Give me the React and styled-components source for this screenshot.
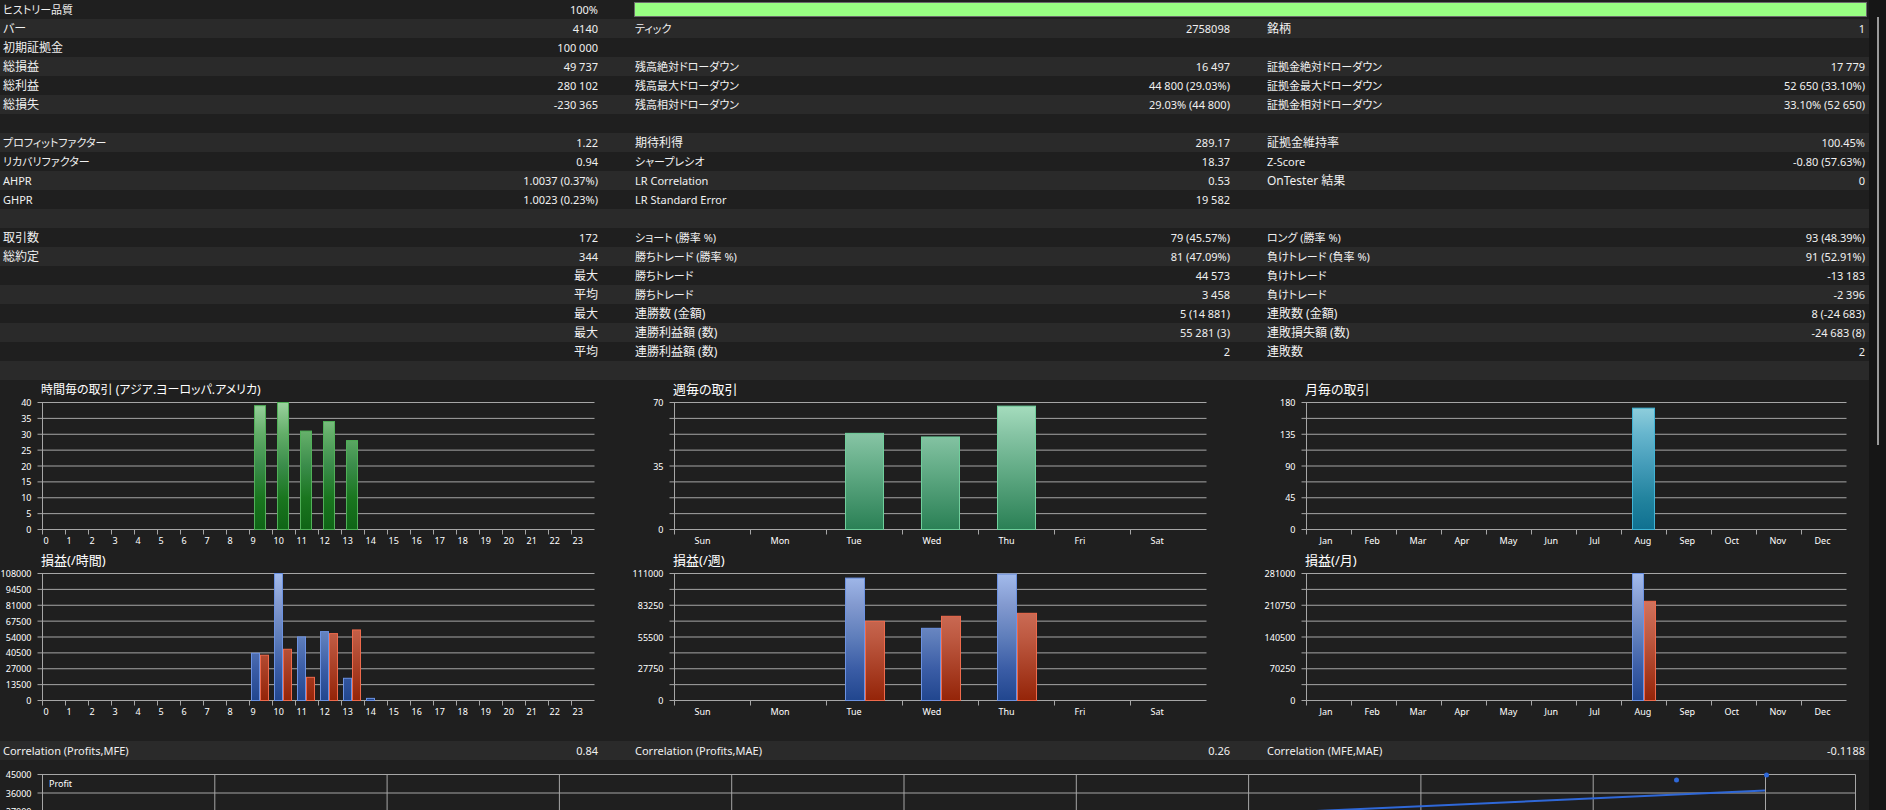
import React from 'react'
import { styled, createGlobalStyle } from 'styled-components'

const GlobalStyle = createGlobalStyle`
  * {
    box-sizing: border-box;
  }
  body {
    margin: 0;
    background: #161616;
    color: #f0f0f0;
    font-family: "Noto Sans", "Noto Sans CJK JP", sans-serif;
    font-feature-settings: "palt";
  }
`;

const Page = styled.div`
  display: flex;
  height: 100vh;
  overflow: hidden;
`;

const Report = styled.main`
  flex: 1;
  min-width: 0;
  background: #1f1f1f;
`;

const ScrollTrack = styled.div`
  width: 17px;
  display: flex;
  justify-content: center;
  padding-top: 17px;
`;

const ScrollThumb = styled.div`
  width: 2px;
  height: 54%;
  background: #9a9a9a;
`;

const Table = styled.table`
  width: 100%;
  table-layout: fixed;
  border-collapse: collapse;
`;

const Col = styled.col`
  width: ${(p) => p.$width};
`;

const Row = styled.tr`
  height: 19px;
  background: ${(p) => (p.$shaded ? '#2a2a2a' : '#1f1f1f')};
`;

const Label = styled.th`
  height: 19px;
  padding: 0 0 0 3px;
  font-size: ${(p) => (p.$small ? '11px' : '12px')};
  font-weight: 400;
  line-height: 18px;
  text-align: left;
  white-space: nowrap;
`;

const Value = styled.td`
  height: 19px;
  padding: 0 ${(p) => (p.$last ? '4px' : '34px')} 0 0;
  font-size: ${(p) => (p.$small ? '11px' : '12px')};
  line-height: 18px;
  text-align: right;
  white-space: nowrap;
`;

const QualityCell = styled.td`
  height: 19px;
  padding: 0 2px;
`;

const Quality = styled.progress`
  display: block;
  width: 100%;
  height: 15px;
  appearance: none;
  border: 1px solid #6b6b6b;
  background: #1f1f1f;

  &::-webkit-progress-bar {
    background: #1f1f1f;
  }
  &::-webkit-progress-value {
    background: #98ff82;
  }
`;

const Charts = styled.section`
  display: grid;
  grid-template-columns: 632fr 632fr 605fr;
  padding-bottom: 19px;
`;

const Figure = styled.figure`
  margin: 0;
  min-width: 0;
`;

const Title = styled.figcaption`
  height: 19px;
  padding-left: 41px;
  color: #fff;
  font-size: ${(p) => (p.$small ? '12px' : '13px')};
  line-height: 19px;
  white-space: nowrap;
`;

const Plot = styled.svg`
  display: block;
  width: 100%;
  height: auto;
  overflow: visible;
`;

const AxisText = styled.text`
  fill: #fff;
  font-size: 9px;
`;

const Balance = styled.section`
  padding-top: 10px;
`;

const summary = [
  ['ヒストリー品質', '100%'],
  ['バー', '4140', 'ティック', '2758098', '銘柄', '1'],
  ['初期証拠金', '100 000', '', '', '', ''],
  ['総損益', '49 737', '残高絶対ドローダウン', '16 497', '証拠金絶対ドローダウン', '17 779'],
  ['総利益', '280 102', '残高最大ドローダウン', '44 800 (29.03%)', '証拠金最大ドローダウン', '52 650 (33.10%)'],
  ['総損失', '-230 365', '残高相対ドローダウン', '29.03% (44 800)', '証拠金相対ドローダウン', '33.10% (52 650)'],
  ['', '', '', '', '', ''],
  ['プロフィットファクター', '1.22', '期待利得', '289.17', '証拠金維持率', '100.45%'],
  ['リカバリファクター', '0.94', 'シャープレシオ', '18.37', 'Z-Score', '-0.80 (57.63%)'],
  ['AHPR', '1.0037 (0.37%)', 'LR Correlation', '0.53', 'OnTester 結果', '0'],
  ['GHPR', '1.0023 (0.23%)', 'LR Standard Error', '19 582', '', ''],
  ['', '', '', '', '', ''],
  ['取引数', '172', 'ショート (勝率 %)', '79 (45.57%)', 'ロング (勝率 %)', '93 (48.39%)'],
  ['総約定', '344', '勝ちトレード (勝率 %)', '81 (47.09%)', '負けトレード (負率 %)', '91 (52.91%)'],
  ['', '最大', '勝ちトレード', '44 573', '負けトレード', '-13 183'],
  ['', '平均', '勝ちトレード', '3 458', '負けトレード', '-2 396'],
  ['', '最大', '連勝数 (金額)', '5 (14 881)', '連敗数 (金額)', '8 (-24 683)'],
  ['', '最大', '連勝利益額 (数)', '55 281 (3)', '連敗損失額 (数)', '-24 683 (8)'],
  ['', '平均', '連勝利益額 (数)', '2', '連敗数', '2'],
  ['', '', '', '', '', ''],
];

const correlation = [
  ['Correlation (Profits,MFE)', '0.84', 'Correlation (Profits,MAE)', '0.26', 'Correlation (MFE,MAE)', '-0.1188'],
];

const hours = Array.from({ length: 24 }, (_, i) => String(i));
const days = ['Sun', 'Mon', 'Tue', 'Wed', 'Thu', 'Fri', 'Sat'];
const months = ['Jan', 'Feb', 'Mar', 'Apr', 'May', 'Jun', 'Jul', 'Aug', 'Sep', 'Oct', 'Nov', 'Dec'];

const layouts = {
  hour: { width: 632, step: 23, textAt: 1, barAt: 5, barWidth: 11, pairAt: 2, pairWidth: 9 },
  day: { width: 632, step: 76, textAt: 20, barAt: 19, barWidth: 38, pairAt: 19, pairWidth: 20 },
  month: { width: 605, step: 45, textAt: 13, barAt: 11, barWidth: 22, pairAt: 11, pairWidth: 12 },
};

const fills = {
  green: { stroke: '#50b058', stops: ['#9bd39f', '#62ad68', '#3a8c4a', '#1a761f', '#0f6416'] },
  mint: { stroke: '#6fcf9c', stops: ['#a8dfc0', '#86c4a4', '#66ae89', '#48976f', '#2a8055'] },
  cyan: { stroke: '#3fb4d6', stops: ['#97d3df', '#66b5cd', '#439bb8', '#23849f', '#0f7090'] },
  blue: { stroke: '#6c92e2', stops: ['#a3bbec', '#8299cf', '#5f7ebb', '#3b5da6', '#21468e'] },
  red: { stroke: '#ee6a4c', stops: ['#e98d75', '#cf705a', '#be5a42', '#a93f25', '#942408'] },
};

const charts = [
  {
    title: '時間毎の取引 (アジア.ヨーロッパ.アメリカ)',
    kind: 'hour',
    names: hours,
    max: 40,
    ticks: [0, 5, 10, 15, 20, 25, 30, 35, 40],
    series: [{ fill: 'green', data: { 9: 39, 10: 40, 11: 31, 12: 34, 13: 28 } }],
  },
  {
    title: '週毎の取引',
    kind: 'day',
    names: days,
    max: 70,
    ticks: [0, 35, 70],
    series: [{ fill: 'mint', data: { 2: 53, 3: 51, 4: 68 } }],
  },
  {
    title: '月毎の取引',
    kind: 'month',
    names: months,
    max: 180,
    ticks: [0, 45, 90, 135, 180],
    series: [{ fill: 'cyan', data: { 7: 172 } }],
  },
  {
    title: '損益(/時間)',
    kind: 'hour',
    names: hours,
    max: 108000,
    ticks: [0, 13500, 27000, 40500, 54000, 67500, 81000, 94500, 108000],
    series: [
      { fill: 'blue', data: { 9: 40160, 10: 108000, 11: 54070, 12: 58600, 13: 18900, 14: 1800 } },
      { fill: 'red', data: { 9: 38500, 10: 43570, 11: 19700, 12: 56900, 13: 60000 } },
    ],
  },
  {
    title: '損益(/週)',
    kind: 'day',
    names: days,
    max: 111000,
    ticks: [0, 27750, 55500, 83250, 111000],
    series: [
      { fill: 'blue', data: { 2: 107000, 3: 63100, 4: 110500 } },
      { fill: 'red', data: { 2: 69250, 3: 73600, 4: 76200 } },
    ],
  },
  {
    title: '損益(/月)',
    kind: 'month',
    names: months,
    max: 281000,
    ticks: [0, 70250, 140500, 210750, 281000],
    series: [
      { fill: 'blue', data: { 7: 281000 } },
      { fill: 'red', data: { 7: 219500 } },
    ],
  },
];

const LINE = '#a6a6a6';
const LEFT = 42.5;
const TOP = 3.5;
const HEIGHT = 127;
const BOTTOM = TOP + HEIGHT;

const isWide = (text) => /^[\x20-\x7e]+$/.test(text) || /[ァ-ー]{3}/.test(text);

const StatsTable = ({ rows, shadeOdd }) => (
  <Table>
    <colgroup>
      <Col $width="17%" />
      <Col $width="16.815%" />
      <Col $width="17%" />
      <Col $width="16.815%" />
      <Col $width="17%" />
      <Col $width="15.37%" />
    </colgroup>
    <tbody>
      {rows.map((row, i) => (
        <Row key={i} $shaded={shadeOdd ? i % 2 === 1 : true}>
          {row.map((text, j) =>
            j % 2 === 0 ? (
              <Label key={j} scope="row" $small={isWide(text)}>{text}</Label>
            ) : (
              <Value key={j} $last={j === 5} $small={isWide(text)}>{text}</Value>
            )
          )}
          {row.length === 2 && (
            <QualityCell colSpan={4}>
              <Quality aria-label="ヒストリー品質" value={100} max={100} />
            </QualityCell>
          )}
        </Row>
      ))}
    </tbody>
  </Table>
);

const Gradient = ({ id, stops }) => (
  <linearGradient id={id} gradientUnits="userSpaceOnUse" x1="0" y1={TOP} x2="0" y2={BOTTOM}>
    {stops.map((color, i) => (
      <stop key={color} offset={i / (stops.length - 1)} stopColor={color} />
    ))}
  </linearGradient>
);

const BarChart = ({ id, title, kind, names, max, ticks, series }) => {
  const box = layouts[kind];
  const right = LEFT + box.step * names.length;
  const paired = series.length > 1;
  const start = paired ? box.pairAt : box.barAt;
  const width = paired ? box.pairWidth : box.barWidth;

  return (
    <Figure>
      <Title $small={isWide(title)}>{title}</Title>
      <Plot viewBox={`0 0 ${box.width} 152`} role="img" aria-label={title}>
        <defs>
          {series.map((s) => (
            <Gradient key={s.fill} id={`${id}-${s.fill}`} stops={fills[s.fill].stops} />
          ))}
        </defs>
        <g stroke={LINE}>
          {Array.from({ length: 9 }, (_, i) => (
            <line key={i} x1={LEFT - 5} x2={right} y1={BOTTOM - (HEIGHT * i) / 8} y2={BOTTOM - (HEIGHT * i) / 8} />
          ))}
          {names.map((name, i) => (
            <line key={name} x1={LEFT + box.step * i} x2={LEFT + box.step * i} y1={BOTTOM} y2={BOTTOM + 5} />
          ))}
          <line x1={LEFT} x2={LEFT} y1={TOP} y2={BOTTOM} />
        </g>
        {ticks.map((tick) => (
          <AxisText key={tick} x={LEFT - 11} y={BOTTOM + 3.5 - (HEIGHT * tick) / max} textAnchor="end">{tick}</AxisText>
        ))}
        {names.map((name, i) => (
          <AxisText key={name} x={LEFT + box.step * i + box.textAt} y={BOTTOM + 14}>{name}</AxisText>
        ))}
        {series.map((s, n) =>
          Object.entries(s.data).map(([slot, value]) => {
            const h = (HEIGHT * value) / max;
            return (
              <rect
                key={s.fill + slot}
                x={LEFT + box.step * slot + start + n * width}
                y={BOTTOM - h}
                width={paired ? width - 1 : width}
                height={h}
                fill={`url(#${id}-${s.fill})`}
                stroke={fills[s.fill].stroke}
              />
            );
          })
        )}
      </Plot>
    </Figure>
  );
};

// profit against MFE, the lower part runs below the fold
const ProfitChart = () => (
  <Plot viewBox="0 0 1869 220" role="img" aria-label="Profit">
    <g stroke={LINE}>
      {Array.from({ length: 11 }, (_, i) => (
        <line key={i} x1={LEFT + 172.3 * i} x2={LEFT + 172.3 * i} y1="4.5" y2="190" />
      ))}
      <line x1="1855.5" x2="1855.5" y1="4.5" y2="190" />
      {Array.from({ length: 11 }, (_, i) => (
        <line key={i} x1={LEFT - 5} x2="1855.5" y1={4.5 + 18.5 * i} y2={4.5 + 18.5 * i} />
      ))}
    </g>
    {[45000, 36000, 27000, 18000, 9000, 0].map((tick, i) => (
      <AxisText key={tick} x={LEFT - 11} y={8 + 18.5 * i} textAnchor="end">{tick}</AxisText>
    ))}
    <AxisText x="49" y="17">Profit</AxisText>
    <line x1="900" y1="60" x2="1765" y2="20.5" stroke="#2f68d8" strokeWidth="2" />
    <circle cx="1676.5" cy="10" r="2.5" fill="#2f68d8" />
    <circle cx="1766.5" cy="5" r="2.5" fill="#2f68d8" />
  </Plot>
);

const App = () => (
  <>
    <GlobalStyle />
    <Page>
      <Report>
        <StatsTable rows={summary} shadeOdd />
        <Charts>
          {charts.map((chart, i) => (
            <BarChart key={chart.title} id={`chart${i}`} {...chart} />
          ))}
        </Charts>
        <StatsTable rows={correlation} />
        <Balance>
          <ProfitChart />
        </Balance>
      </Report>
      <ScrollTrack>
        <ScrollThumb />
      </ScrollTrack>
    </Page>
  </>
)

export default App
